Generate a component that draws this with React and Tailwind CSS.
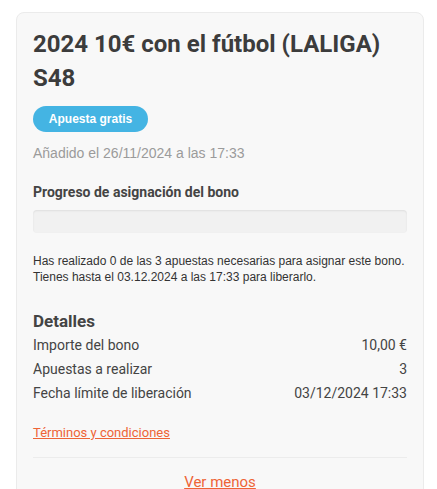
import React from 'react';

const details = [
    { label: 'Importe del bono', value: '10,00 €' },
    { label: 'Apuestas a realizar', value: '3' },
    { label: 'Fecha límite de liberación', value: '03/12/2024 17:33' },
];

export default function App() {
    return (
        <div className="min-h-[489px] bg-white pt-3 pl-4 pr-[13px] font-['Roboto',sans-serif]">
            <div className="rounded-lg border border-[#ebebeb] bg-[#f8f8f8] pl-4 pr-4 pt-[14px]">
                {/* Header */}
                <h1 className="text-[24px] font-bold leading-[34px] text-[#3c3c3c]">
                    2024 10€ con el fútbol (LALIGA) S48
                </h1>
                <span className="mt-[11px] inline-flex h-[26px] w-[115px] items-center justify-center rounded-full bg-[#44b4e3] font-['Liberation_Sans',Arial,sans-serif] text-[12px] font-bold text-white">
                    Apuesta gratis
                </span>
                <p className="mt-[11px] font-['Liberation_Sans',Arial,sans-serif] text-[14px] leading-5 text-[#9b9b9b]">
                    Añadido el 26/11/2024 a las 17:33
                </p>

                {/* Progress */}
                <h2 className="mt-[19px] text-[14px] font-bold leading-5 text-[#444]">
                    Progreso de asignación del bono
                </h2>
                <div className="mt-2 h-[23px] rounded-[4px] bg-[#f1f1f1] shadow-[inset_0_1px_2px_rgba(0,0,0,0.08)]"></div>
                <p className="mt-5 font-['Liberation_Sans',Arial,sans-serif] text-[12px] leading-4 text-[#333]">
                    Has realizado 0 de las 3 apuestas necesarias para asignar este bono.
                    <br />
                    Tienes hasta el 03.12.2024 a las 17:33 para liberarlo.
                </p>

                {/* Details */}
                <h3 className="mt-6 text-[17px] font-bold leading-6 text-[#444]">Detalles</h3>
                <div className="text-[14px] leading-6 text-[#444]">
                    {details.map((d) => (
                        <div key={d.label} className="flex justify-between">
                            <span>{d.label}</span>
                            <span>{d.value}</span>
                        </div>
                    ))}
                </div>

                <a href="#" className="mt-[18px] inline-block text-[13px] leading-5 text-[#ee6436] underline">
                    Términos y condiciones
                </a>
                <div className="mt-[13px] border-t border-[#ececec]"></div>
                <div className="pt-[12px] pb-3 text-center">
                    <a href="#" className="text-[15px] leading-5 text-[#ee6436] underline">
                        Ver menos
                    </a>
                </div>
            </div>
        </div>
    );
}
